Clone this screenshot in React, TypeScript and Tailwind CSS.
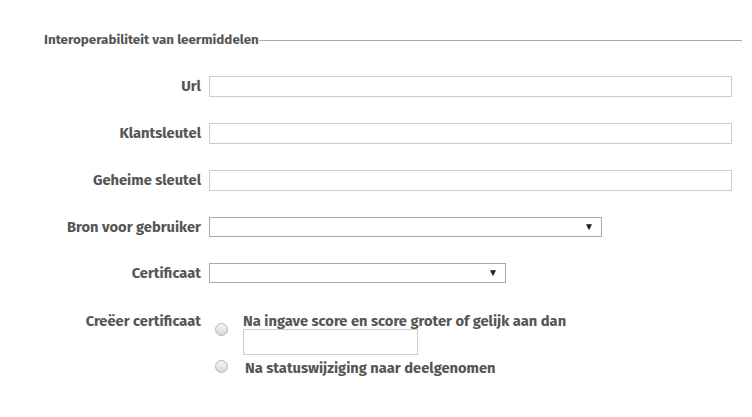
import React from 'react';

const font = { fontFamily: '"Fira Sans", "Open Sans", "Noto Sans", sans-serif' };

const TextRow = (props: { label: string; top: string }) => (
    <div className={`flex items-center ${props.top}`}>
        <label className="w-[165px] pr-[8px] text-right text-[14.7px] font-bold leading-[21px] text-[#555]">
            {props.label}
        </label>
        <input className="h-[21px] w-[523px] border border-[#ccc] bg-white outline-none" />
    </div>
);

const SelectRow = (props: { label: string; width: string; top: string }) => (
    <div className={`flex items-center ${props.top}`}>
        <label className="w-[165px] pr-[8px] text-right text-[14.7px] font-bold leading-[20px] text-[#555]">
            {props.label}
        </label>
        <div className={`flex h-[20px] items-center justify-end border border-[#aaa] bg-white pr-[7px] ${props.width}`}>
            <span className="text-[10px] leading-none text-[#222]">▼</span>
        </div>
    </div>
);

const Radio = () => (
    <span className="inline-block h-[13px] w-[13px] rounded-full border border-[#b4b4b4] bg-gradient-to-b from-[#f4f4f4] to-[#d8d8d8]"></span>
);

export default function App() {
    return (
        <div className="h-[417px] w-[752px] bg-white" style={font}>
            <div className="pt-[30px]">
                <fieldset className="ml-[44px] w-[698px] border-t border-[#aaa] p-0">
                    <legend className="p-0 text-[13.4px] font-bold text-[#555]">
                        Interoperabiliteit van leermiddelen
                    </legend>
                    <TextRow label="Url" top="mt-[26px]" />
                    <TextRow label="Klantsleutel" top="mt-[26px]" />
                    <TextRow label="Geheime sleutel" top="mt-[26px]" />
                    <SelectRow label="Bron voor gebruiker" width="w-[393px]" top="mt-[26px]" />
                    <SelectRow label="Certificaat" width="w-[297px]" top="mt-[26px]" />
                    <div className="mt-[28px] flex">
                        <label className="w-[165px] pr-[8px] text-right text-[14.7px] font-bold leading-[20px] text-[#555]">
                            Creëer certificaat
                        </label>
                        <div className="flex flex-col">
                            <div className="flex">
                                <div className="w-[34px] pl-[6px] pt-[8px]">
                                    <Radio />
                                </div>
                                <div className="flex flex-col">
                                    <span className="text-[14.7px] font-bold leading-[20px] text-[#555]">
                                        Na ingave score en score groter of gelijk aan dan
                                    </span>
                                    <input className="-mt-[2px] h-[26px] w-[175px] border border-[#ccc] bg-white outline-none" />
                                </div>
                            </div>
                            <div className="mt-[1px] flex items-center">
                                <div className="w-[36px] pl-[6px]">
                                    <Radio />
                                </div>
                                <span className="text-[14.7px] font-bold leading-[20px] text-[#555]">
                                    Na statuswijziging naar deelgenomen
                                </span>
                            </div>
                        </div>
                    </div>
                </fieldset>
            </div>
        </div>
    );
}
